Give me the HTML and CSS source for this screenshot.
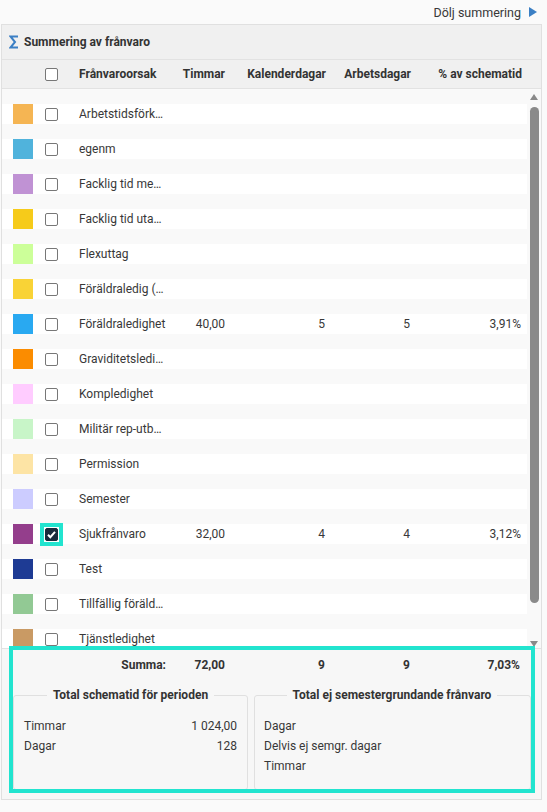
FILE: index.html
```html
<!DOCTYPE html>
<html lang="sv">
<head>
<meta charset="utf-8">
<title>Summering av frånvaro</title>
<link rel="stylesheet" href="styles.css">
</head>
<body>
<div class="top">
  <span class="hide-link">Dölj summering</span>
  <svg class="tri" width="8" height="10" viewBox="0 0 8 10"><polygon points="0,0 8,5 0,10" fill="#3b7fc4"/></svg>
</div>
<div class="panel">
  <div class="title">
    <svg class="sigma" width="10" height="14" viewBox="0 0 10 14"><polyline points="9,1.5 1.5,1.5 6,7 1.5,12.5 9,12.5" fill="none" stroke="#3b7fc4" stroke-width="2"/></svg>
    <span>Summering av frånvaro</span>
  </div>
  <div class="colhead">
    <span class="sw-blank"></span>
    <span class="cb"></span>
    <span class="name">Frånvaroorsak</span>
    <span class="t">Timmar</span>
    <span class="k">Kalenderdagar</span>
    <span class="a">Arbetsdagar</span>
    <span class="p">% av schematid</span>
  </div>
  <div class="body">
    <div class="list">
      <div class="row"><span class="sw" style="background:#f5b553"></span><span class="cb"></span><span class="name">Arbetstidsförk…</span></div>
      <div class="row"><span class="sw" style="background:#50b3dc"></span><span class="cb"></span><span class="name">egenm</span></div>
      <div class="row"><span class="sw" style="background:#c092d4"></span><span class="cb"></span><span class="name">Facklig tid me…</span></div>
      <div class="row"><span class="sw" style="background:#f6cb1a"></span><span class="cb"></span><span class="name">Facklig tid uta…</span></div>
      <div class="row"><span class="sw" style="background:#ccff99"></span><span class="cb"></span><span class="name">Flexuttag</span></div>
      <div class="row"><span class="sw" style="background:#f9d336"></span><span class="cb"></span><span class="name">Föräldraledig (…</span></div>
      <div class="row"><span class="sw" style="background:#29a9f1"></span><span class="cb"></span><span class="name">Föräldraledighet</span><span class="t">40,00</span><span class="k">5</span><span class="a">5</span><span class="p">3,91%</span></div>
      <div class="row"><span class="sw" style="background:#fb8c00"></span><span class="cb"></span><span class="name">Graviditetsledi…</span></div>
      <div class="row"><span class="sw" style="background:#ffccff"></span><span class="cb"></span><span class="name">Kompledighet</span></div>
      <div class="row"><span class="sw" style="background:#c8f5c8"></span><span class="cb"></span><span class="name">Militär rep-utb…</span></div>
      <div class="row"><span class="sw" style="background:#fde4a5"></span><span class="cb"></span><span class="name">Permission</span></div>
      <div class="row"><span class="sw" style="background:#ccccff"></span><span class="cb"></span><span class="name">Semester</span></div>
      <div class="row"><span class="sw" style="background:#943e8c"></span><span class="cb checked"><svg width="13" height="13" viewBox="0 0 13 13"><polyline points="3,6.8 5.3,9.2 10,3.8" fill="none" stroke="#fff" stroke-width="2"/></svg></span><span class="name">Sjukfrånvaro</span><span class="t">32,00</span><span class="k">4</span><span class="a">4</span><span class="p">3,12%</span></div>
      <div class="row"><span class="sw" style="background:#1e3b94"></span><span class="cb"></span><span class="name">Test</span></div>
      <div class="row"><span class="sw" style="background:#92c994"></span><span class="cb"></span><span class="name">Tillfällig föräld…</span></div>
      <div class="row"><span class="sw" style="background:#c99a64"></span><span class="cb"></span><span class="name">Tjänstledighet</span></div>
    </div>
    <div class="scroll">
      <span class="arrow-up"></span>
      <span class="thumb"></span>
      <span class="arrow-down"></span>
    </div>
  </div>
  <div class="footer">
    <div class="sumrow">
      <span class="sw-blank"></span>
      <span class="cb-blank"></span>
      <span class="name">Summa:</span>
      <span class="t">72,00</span>
      <span class="k">9</span>
      <span class="a">9</span>
      <span class="p">7,03%</span>
    </div>
    <div class="sets">
      <fieldset class="fs fs1">
        <legend>Total schematid för perioden</legend>
        <div class="kv"><span>Timmar</span><span>1 024,00</span></div>
        <div class="kv"><span>Dagar</span><span>128</span></div>
      </fieldset>
      <fieldset class="fs fs2">
        <legend>Total ej semestergrundande frånvaro</legend>
        <div class="kv"><span>Dagar</span><span></span></div>
        <div class="kv"><span>Delvis ej semgr. dagar</span><span></span></div>
        <div class="kv"><span>Timmar</span><span></span></div>
      </fieldset>
    </div>
  </div>
</div>
</body>
</html>
```

FILE: styles.css
```css
* { box-sizing: border-box; }
html, body { margin: 0; padding: 0; }
body {
  background: #fafafa;
  font-family: Roboto, "Liberation Sans", Arial, sans-serif;
  font-size: 12px;
  color: #383838;
  width: 547px;
  height: 812px;
  overflow: hidden;
}
.top {
  height: 24px;
  display: flex;
  justify-content: flex-end;
  align-items: center;
  padding-right: 10px;
  gap: 8px;
}
.hide-link { font-size: 12.5px; color: #383838; }
.tri { display: block; }

.panel {
  margin-left: 1px;
  width: 541px;
  border: 1px solid #e0e0e0;
  background: #f9f9f9;
}
.title {
  height: 35px;
  background: #f0f0f0;
  border-bottom: 1px solid #e2e2e2;
  display: flex;
  align-items: center;
  padding-left: 7px;
  gap: 5px;
  font-weight: bold;
  color: #333;
}
.sigma { display: block; }

.colhead, .row, .sumrow {
  display: flex;
  align-items: center;
}
.colhead {
  height: 29px;
  background: #f0f0f0;
  border-bottom: 1px solid #e2e2e2;
  font-weight: bold;
  color: #333;
}
.sw, .sw-blank { width: 20px; height: 20px; margin-left: 11px; flex: none; }
.cb, .cb-blank {
  width: 13px; height: 13px; margin-left: 12px; flex: none;
}
.cb {
  border: 1px solid #777;
  border-radius: 2px;
  background: #fff;
}
.cb.checked {
  position: relative;
  background: #182a3c;
  border-color: #182a3c;
  display: flex;
  align-items: center;
  justify-content: center;
}
.cb.checked::before {
  content: "";
  position: absolute;
  left: -6px;
  top: -6px;
  right: -6px;
  bottom: -6px;
  border: 4px solid #22e4cf;
}
.cb.checked svg { display: block; margin: -1px; }
.name { margin-left: 21px; width: 90px; flex: none; white-space: nowrap; }
.t { width: 56px; text-align: right; flex: none; }
.k { width: 100px; text-align: right; flex: none; }
.a { width: 85px; text-align: right; flex: none; }
.p { width: 111px; text-align: right; flex: none; }
.colhead .k { width: 101px; }

.body {
  display: flex;
  height: 559px;
  overflow: hidden;
}
.list {
  width: 525px;
  padding-top: 15px;
  overflow: hidden;
}
.row {
  height: 20px;
  margin-bottom: 15px;
  background: #fff;
}
.scroll {
  width: 14px;
  display: flex;
  flex-direction: column;
  align-items: center;
}
.arrow-up {
  margin-top: 5px;
  width: 0; height: 0;
  border-left: 4.5px solid transparent;
  border-right: 4.5px solid transparent;
  border-bottom: 6px solid #8a8a8a;
}
.thumb {
  margin-top: 7px;
  width: 9px;
  height: 496px;
  border-radius: 5px;
  background: #8a8a8a;
}
.arrow-down {
  margin-top: auto;
  margin-bottom: 1px;
  width: 0; height: 0;
  border-left: 4.5px solid transparent;
  border-right: 4.5px solid transparent;
  border-top: 6px solid #8a8a8a;
}

.footer {
  position: relative;
  border-top: 1px solid #e2e2e2;
  background: #f7f7f7;
  height: 151px;
}
.footer::after {
  content: "";
  position: absolute;
  left: 7px;
  top: -3px;
  right: 6px;
  bottom: 6px;
  border: 4px solid #22e4cf;
  pointer-events: none;
}
.sumrow {
  height: 32px;
  font-weight: bold;
  color: #333;
}
.sumrow .name { text-align: right; padding-right: 3px; }
.sumrow .p { padding-right: 1px; }

.sets {
  display: flex;
  gap: 6px;
  margin-top: 6px;
  padding-left: 11px;
  height: 103px;
}
.fs {
  margin: 0;
  min-width: 0;
  border: 1px solid #e0e0e0;
  border-radius: 3px;
  padding: 13px 10px 0 10px;
}
.fs1 { width: 235px; }
.fs2 { width: 277px; padding-left: 9px; }
.fs legend {
  margin-left: auto;
  margin-right: auto;
  padding: 0 6px;
  font-weight: bold;
  font-size: 12px;
  line-height: 16px;
  color: #333;
}
.kv {
  display: flex;
  justify-content: space-between;
  line-height: 20px;
  height: 20px;
}
```
